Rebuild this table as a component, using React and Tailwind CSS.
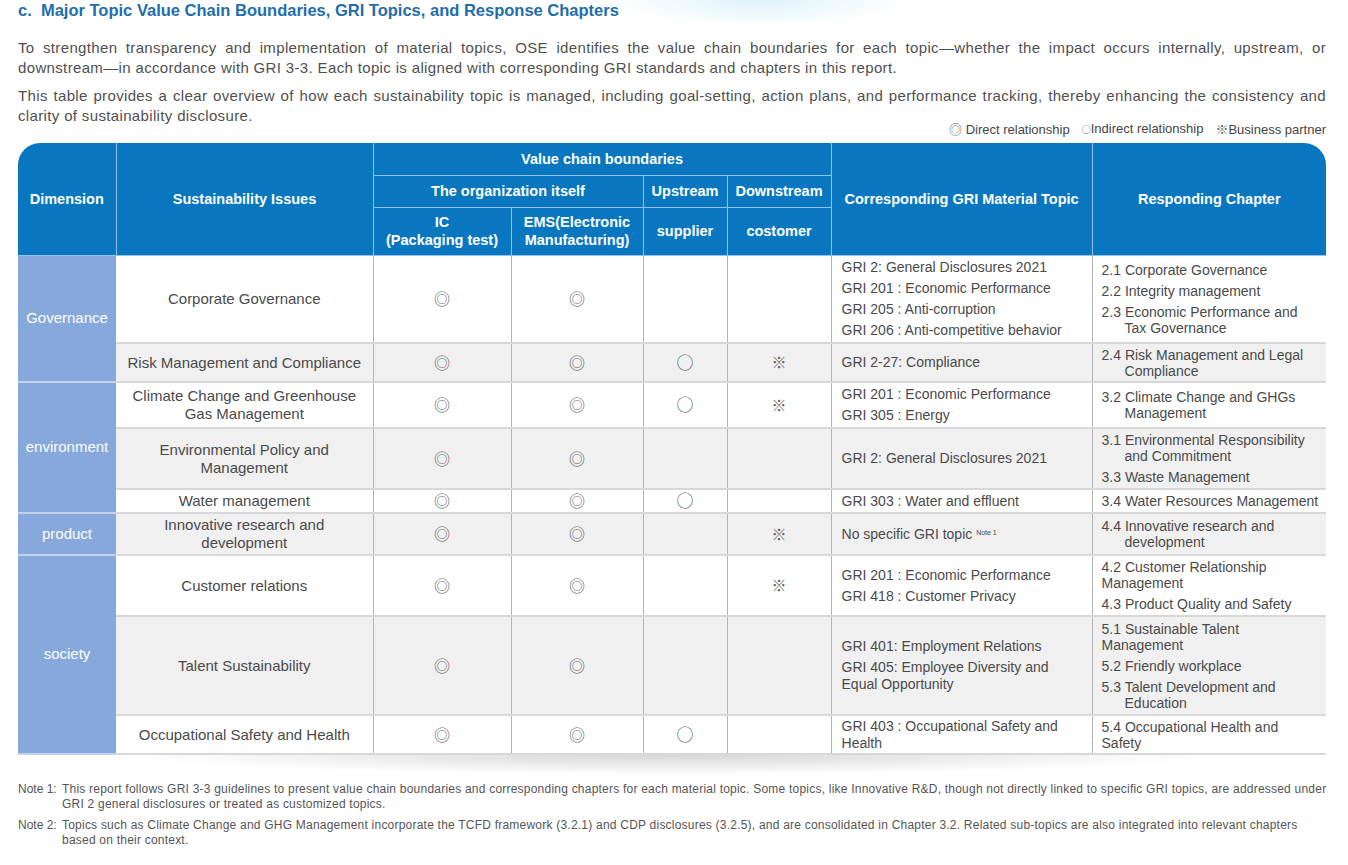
import React from 'react';

const D = '◎';
const O = '○';
const X = '※';

// one entry per body row of the table
const rows = [
  {
    dim: 'Governance', span: 2, h: 88, gray: false,
    issue: ['Corporate Governance'], ic: D, ems: D, sup: '', cus: '',
    gri: [['GRI 2: General Disclosures 2021'], ['GRI 201 : Economic Performance'], ['GRI 205 : Anti-corruption'], ['GRI 206 : Anti-competitive behavior']],
    ch: [
      { lines: ['2.1 Corporate Governance'] },
      { lines: ['2.2 Integrity management'] },
      { lines: ['2.3 Economic Performance and', 'Tax Governance'], indent: true },
    ],
  },
  {
    h: 39, gray: true,
    issue: ['Risk Management and Compliance'], ic: D, ems: D, sup: O, cus: X,
    gri: [['GRI 2-27: Compliance']],
    ch: [{ lines: ['2.4 Risk Management and Legal', 'Compliance'], indent: true }],
  },
  {
    dim: 'environment', span: 3, h: 46, gray: false,
    issue: ['Climate Change and Greenhouse', 'Gas Management'], ic: D, ems: D, sup: O, cus: X,
    gri: [['GRI 201 : Economic Performance'], ['GRI 305 : Energy']],
    ch: [{ lines: ['3.2 Climate Change and GHGs', 'Management'], indent: true }],
  },
  {
    h: 61, gray: true,
    issue: ['Environmental Policy and', 'Management'], ic: D, ems: D, sup: '', cus: '',
    gri: [['GRI 2: General Disclosures 2021']],
    ch: [
      { lines: ['3.1 Environmental Responsibility', 'and Commitment'], indent: true },
      { lines: ['3.3 Waste Management'] },
    ],
  },
  {
    h: 24, gray: false,
    issue: ['Water management'], ic: D, ems: D, sup: O, cus: '',
    gri: [['GRI 303 : Water and effluent']],
    ch: [{ lines: ['3.4 Water Resources Management'] }],
  },
  {
    dim: 'product', span: 1, h: 42, gray: true,
    issue: ['Innovative research and', 'development'], ic: D, ems: D, sup: '', cus: X,
    gri: 'note',
    ch: [{ lines: ['4.4 Innovative research and', 'development'], indent: true }],
  },
  {
    dim: 'society', span: 3, h: 61, gray: false,
    issue: ['Customer relations'], ic: D, ems: D, sup: '', cus: X,
    gri: [['GRI 201 : Economic Performance'], ['GRI 418 : Customer Privacy']],
    ch: [
      { lines: ['4.2 Customer Relationship', 'Management'] },
      { lines: ['4.3 Product Quality and Safety'] },
    ],
  },
  {
    h: 99, gray: true,
    issue: ['Talent Sustainability'], ic: D, ems: D, sup: '', cus: '',
    gri: [['GRI 401: Employment Relations'], ['GRI 405: Employee Diversity and', 'Equal Opportunity']],
    ch: [
      { lines: ['5.1 Sustainable Talent', 'Management'] },
      { lines: ['5.2 Friendly workplace'] },
      { lines: ['5.3 Talent Development and', 'Education'], indent: true },
    ],
  },
  {
    h: 39, gray: false,
    issue: ['Occupational Safety and Health'], ic: D, ems: D, sup: O, cus: '',
    gri: [['GRI 403 : Occupational Safety and', 'Health']],
    ch: [{ lines: ['5.4 Occupational Health and', 'Safety'] }],
  },
];

const Mark = ({ s }) => (
  <span className={`inline-block leading-[16px] text-[#5e5e5e] font-['Noto_Sans_CJK_JP',sans-serif] ${s === O ? 'text-[17px]' : s === D ? 'text-[16px]' : 'text-[15px]'}`}>{s}</span>
);

const cell = 'border-r border-b-2 border-r-[#b4b4b4] border-b-[#d8d8d8] p-0 align-middle';
const th = 'border border-[#8fc3ea] p-0 text-center align-middle font-bold text-white text-[14.5px] leading-[18px]';

export default function App() {
  return (
    <div className="min-h-[865px] bg-white bg-[radial-gradient(ellipse_150px_26px_at_760px_0px,#dcf3fa,transparent)] pl-[18px] pr-[22px] pt-[1px] font-['Liberation_Sans',Arial,sans-serif] text-[#505050]">
      <h1 className="text-[16.5px] leading-[18px] font-bold text-[#1f6eab]">
        c.&nbsp; Major Topic Value Chain Boundaries, GRI Topics, and Response Chapters
      </h1>

      <div className="mt-[19px] text-[15px] leading-[20px] tracking-[0.35px]">
        <p>
          <span className="block text-justify [text-align-last:justify]">
            To strengthen transparency and implementation of material topics, OSE identifies the value chain boundaries for each topic—whether the impact occurs internally, upstream, or
          </span>
          <span className="block">downstream—in accordance with GRI 3-3. Each topic is aligned with corresponding GRI standards and chapters in this report.</span>
        </p>
        <p className="mt-[8px]">
          <span className="block text-justify [text-align-last:justify]">
            This table provides a clear overview of how each sustainability topic is managed, including goal-setting, action plans, and performance tracking, thereby enhancing the consistency and
          </span>
          <span className="block">clarity of sustainability disclosure.</span>
        </p>
      </div>

      <div className="mt-[-5px] flex justify-end gap-[12px] text-[13px] leading-[16px] text-[#444]">
        <span><span className="font-['Noto_Sans_CJK_JP',sans-serif] text-[#666]">◎</span> Direct relationship</span>
        <span><span className="font-['Noto_Sans_CJK_JP',sans-serif] text-[9px] text-[#666]">○</span>Indirect relationship</span>
        <span><span className="font-['Noto_Sans_CJK_JP',sans-serif] text-[#666]">※</span>Business partner</span>
      </div>

      <div className="mt-[5px] overflow-hidden rounded-t-[22px]">
        <table className="w-full table-fixed border-collapse">
          <colgroup>
            <col className="w-[98px]" />
            <col className="w-[257px]" />
            <col className="w-[138px]" />
            <col className="w-[132px]" />
            <col className="w-[84px]" />
            <col className="w-[104px]" />
            <col className="w-[261px]" />
            <col className="w-[234px]" />
          </colgroup>
          <thead className="bg-[#0877bf]">
            <tr className="h-[32px]">
              <th rowSpan={3} className={`${th} border-l-0 border-t-0`}>Dimension</th>
              <th rowSpan={3} className={`${th} border-t-0`}>Sustainability Issues</th>
              <th colSpan={4} className={`${th} border-t-0`}>Value chain boundaries</th>
              <th rowSpan={3} className={`${th} border-t-0`}>Corresponding GRI Material Topic</th>
              <th rowSpan={3} className={`${th} border-t-0 border-r-0`}>Responding Chapter</th>
            </tr>
            <tr className="h-[32px]">
              <th colSpan={2} className={th}>The organization itself</th>
              <th className={th}>Upstream</th>
              <th className={th}>Downstream</th>
            </tr>
            <tr className="h-[48px]">
              <th className={th}>IC<br />(Packaging test)</th>
              <th className={th}>EMS(Electronic<br />Manufacturing)</th>
              <th className={th}>supplier</th>
              <th className={th}>costomer</th>
            </tr>
          </thead>
          <tbody>
            {rows.map((r, i) => (
              <tr key={i} style={{ height: r.h }} className={r.gray ? 'bg-[#f0f0f0]' : 'bg-white'}>
                {r.dim && (
                  <td rowSpan={r.span} className="border-b-2 border-b-[#c3d3ec] bg-[#86a8da] p-0 text-center align-middle text-[15px] text-white">
                    {r.dim}
                  </td>
                )}
                <td className={`${cell} text-center text-[15px] leading-[18px] text-[#4a4a4a]`}>
                  {r.issue.map((l, k) => <div key={k}>{l}</div>)}
                </td>
                <td className={`${cell} text-center leading-[16px]`}>{r.ic && <Mark s={r.ic} />}</td>
                <td className={`${cell} text-center leading-[16px]`}>{r.ems && <Mark s={r.ems} />}</td>
                <td className={`${cell} text-center leading-[16px]`}>{r.sup && <Mark s={r.sup} />}</td>
                <td className={`${cell} text-center leading-[16px]`}>{r.cus && <Mark s={r.cus} />}</td>
                <td className={`${cell} pl-[10px] text-[14px] leading-[17px] text-[#4a4a4a]`}>
                  {r.gri === 'note' ? (
                    <div>No specific GRI topic <sup className="text-[7px]">Note 1</sup></div>
                  ) : (
                    <div className="flex flex-col gap-[4px]">
                      {r.gri.map((g, k) => (
                        <div key={k}>{g.map((l, m) => <div key={m}>{l}</div>)}</div>
                      ))}
                    </div>
                  )}
                </td>
                <td className={`${cell} border-r-[#d8d8d8] pl-[9px] text-[14px] leading-[16px] text-[#4a4a4a]`}>
                  <div className="flex flex-col gap-[5px]">
                    {r.ch.map((c, k) => (
                      <div key={k}>
                        {c.lines.map((l, m) => (
                          <div key={m} className={m > 0 && c.indent ? 'pl-[23px]' : ''}>{l}</div>
                        ))}
                      </div>
                    ))}
                  </div>
                </td>
              </tr>
            ))}
          </tbody>
        </table>
      </div>
      <div className="h-[26px] bg-[radial-gradient(ellipse_55%_100%_at_50%_0%,rgba(0,0,0,0.16),transparent_75%)]" />

      <div className="mt-[1px] flex flex-col gap-[6px] text-[12px] leading-[15px] tracking-[0.22px] text-[#555]">
        <div className="flex">
          <span className="w-[44px] shrink-0 tracking-normal">Note 1:</span>
          <div className="whitespace-nowrap">
            <div>This report follows GRI 3-3 guidelines to present value chain boundaries and corresponding chapters for each material topic. Some topics, like Innovative R&amp;D, though not directly linked to specific GRI topics, are addressed under</div>
            <div>GRI 2 general disclosures or treated as customized topics.</div>
          </div>
        </div>
        <div className="flex">
          <span className="w-[44px] shrink-0 tracking-normal">Note 2:</span>
          <div className="whitespace-nowrap">
            <div>Topics such as Climate Change and GHG Management incorporate the TCFD framework (3.2.1) and CDP disclosures (3.2.5), and are consolidated in Chapter 3.2. Related sub-topics are also integrated into relevant chapters</div>
            <div>based on their context.</div>
          </div>
        </div>
      </div>
    </div>
  );
}
